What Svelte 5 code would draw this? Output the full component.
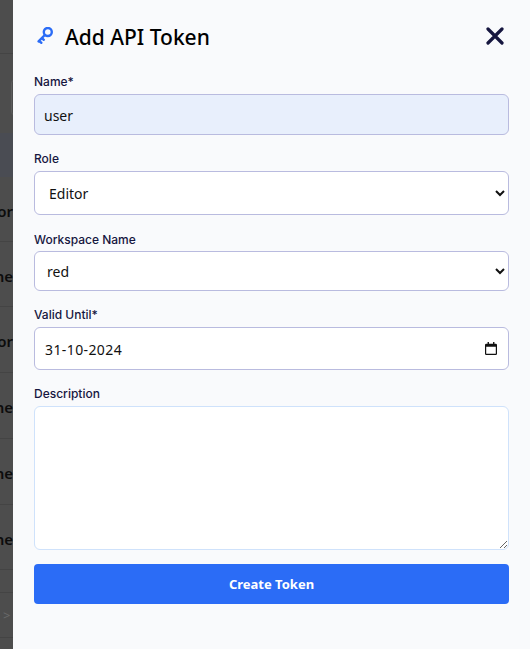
<script lang="ts">
  // rows of the table that is dimmed behind the drawer
  const rows = [
    { h: 65, text: 'or' },
    { h: 65, text: 'ne' },
    { h: 66, text: 'or' },
    { h: 66, text: 'ne' },
    { h: 66, text: 'ne' },
    { h: 65, text: 'ne' },
    { h: 23, text: '' }
  ];

  let name = $state('user');
  let role = $state('Editor');
  let workspace = $state('red');
  let validUntil = $state('31-10-2024');
  let description = $state('');
</script>

<div class="page">
  <div class="backdrop">
    <div class="top"></div>
    <div class="toolbar"><span class="search"></span></div>
    <div class="band"></div>
    {#each rows as row, i (i)}
      <div class="row" style="height: {row.h}px"><span>{row.text}</span></div>
    {/each}
    <div class="pager"><span>&gt;</span></div>
  </div>

  <aside class="drawer">
    <header class="head">
      <svg class="key" width="16" height="17" viewBox="0 0 16 17" fill="none" stroke="currentColor" stroke-width="2.4" stroke-linecap="round" aria-hidden="true">
        <circle cx="10.800" cy="5" r="4" />
        <path d="M7.800 8 1.600 14.400M2 14l2.300 1.700M4.800 11l2 1.800" />
      </svg>
      <h2>Add API Token</h2>
      <button class="close" aria-label="Close">
        <svg width="18" height="18" viewBox="0 0 18 18" fill="none" stroke="currentColor" stroke-width="3.200" stroke-linecap="round">
          <path d="M2 2l14 14M16 2 2 16" />
        </svg>
      </button>
    </header>

    <form class="form">
      <label class="field name">
        <span>Name*</span>
        <input class="filled" type="text" bind:value={name} />
      </label>
      <label class="field role">
        <span>Role</span>
        <select bind:value={role}>
          <option>Editor</option>
          <option>Viewer</option>
        </select>
      </label>
      <label class="field workspace">
        <span>Workspace Name</span>
        <select bind:value={workspace}>
          <option>red</option>
          <option>blue</option>
        </select>
      </label>
      <label class="field valid">
        <span>Valid Until*</span>
        <div class="date">
          <input type="text" bind:value={validUntil} />
          <svg class="cal" width="12" height="13" viewBox="0 0 14 15" aria-hidden="true">
            <path d="M3 0h1.600v2h4.800V0H11v2h1.500A1.500 1.500 0 0 1 14 3.500v10a1.500 1.500 0 0 1-1.500 1.500h-11A1.500 1.500 0 0 1 0 13.500v-10A1.500 1.500 0 0 1 1.500 2H3zM1.400 5.500v8h11.200v-8z" fill="#111" />
          </svg>
        </div>
      </label>
      <label class="field description">
        <span>Description</span>
        <textarea bind:value={description}></textarea>
      </label>
      <button class="submit" type="button">Create Token</button>
    </form>
  </aside>
</div>

<style>
  :global(body) {
    margin: 0;
    background: #4d4d4d;
  }

  .page {
    display: flex;
    height: 649px;
    overflow: hidden;
    font-family: "Noto Sans", "Open Sans", sans-serif;
  }

  .backdrop {
    flex: 0 0 13px;
    background: #4d4d4d;
    overflow: hidden;
  }

  .top {
    height: 54px;
    border-bottom: 1px solid #444;
    box-sizing: border-box;
  }

  .toolbar {
    height: 79px;
    padding-top: 26px;
    box-sizing: border-box;
  }

  .search {
    display: block;
    width: 6px;
    height: 35px;
    margin-left: 11px;
    border: 1px solid #5c5c5c;
    border-radius: 4px;
    box-sizing: border-box;
  }

  .band {
    height: 44px;
    background: #4a4c53;
  }

  .row {
    display: flex;
    align-items: center;
    justify-content: flex-end;
    padding-top: 3px;
    border-bottom: 1px solid #444;
    box-sizing: border-box;
    overflow: hidden;
  }

  .row span {
    flex: none;
    font-size: 15px;
    font-weight: 600;
    color: #0c0c0c;
    white-space: nowrap;
  }

  .pager {
    height: 45px;
    padding-left: 3px;
    border-bottom: 1px solid #444;
    box-sizing: border-box;
    line-height: 45px;
    font-size: 13px;
    color: #6a6a6a;
  }

  .drawer {
    flex: 1;
    min-width: 0;
    padding: 0 21px;
    background: #f9fafc;
  }

  .head {
    display: flex;
    align-items: center;
    height: 74px;
    margin-bottom: -1px;
    color: #000;
  }

  .key {
    flex: none;
    margin: -4px 12px 0 3px;
    color: #2b6cf6;
  }

  h2 {
    flex: 1;
    margin: 0;
    font-size: 21px;
    font-weight: 500;
    line-height: 30px;
  }

  .close {
    display: flex;
    margin: -2px 5px 0 0;
    padding: 0;
    border: 0;
    background: none;
    color: #16163f;
  }

  .form {
    display: flex;
    flex-direction: column;
    padding-top: 1px;
  }

  .field {
    display: flex;
    flex-direction: column;
  }

  .field > span {
    font-family: "Inter", sans-serif;
    font-size: 12px;
    font-weight: 500;
    line-height: 16px;
    color: #16163f;
    margin-bottom: 4px;
  }

  input,
  select,
  textarea {
    width: 100%;
    box-sizing: border-box;
    border: 1px solid #b9bbdf;
    border-radius: 6px;
    background: #fff;
    color: #111;
    font-family: inherit;
    font-size: 14px;
    outline: none;
  }

  input {
    padding: 2px 9px 0;
  }

  select {
    padding: 0 10px;
  }

  .filled {
    background: #e8effc;
  }

  .name input { height: 41px; }
  .role { margin-top: 16px; }
  .role select { height: 44px; }
  .workspace { margin-top: 17px; }
  .workspace > span { margin-bottom: 3px; }
  .workspace select { height: 40px; padding: 0 8px; }
  .valid { margin-top: 16px; }
  .valid input { height: 43px; padding-left: 10px; letter-spacing: 0.4px; }
  .description { margin-top: 16px; }

  textarea {
    display: block;
    height: 144px;
    padding: 8px 10px;
    border-color: #cfe2fb;
    resize: vertical;
  }

  .date {
    position: relative;
  }

  .cal {
    position: absolute;
    top: 15px;
    right: 12px;
  }

  .submit {
    height: 40px;
    margin-top: 14px;
    border: 0;
    border-radius: 4px;
    background: #2b6cf6;
    color: #fff;
    font-family: inherit;
    font-size: 13px;
    font-weight: 700;
  }
</style>
